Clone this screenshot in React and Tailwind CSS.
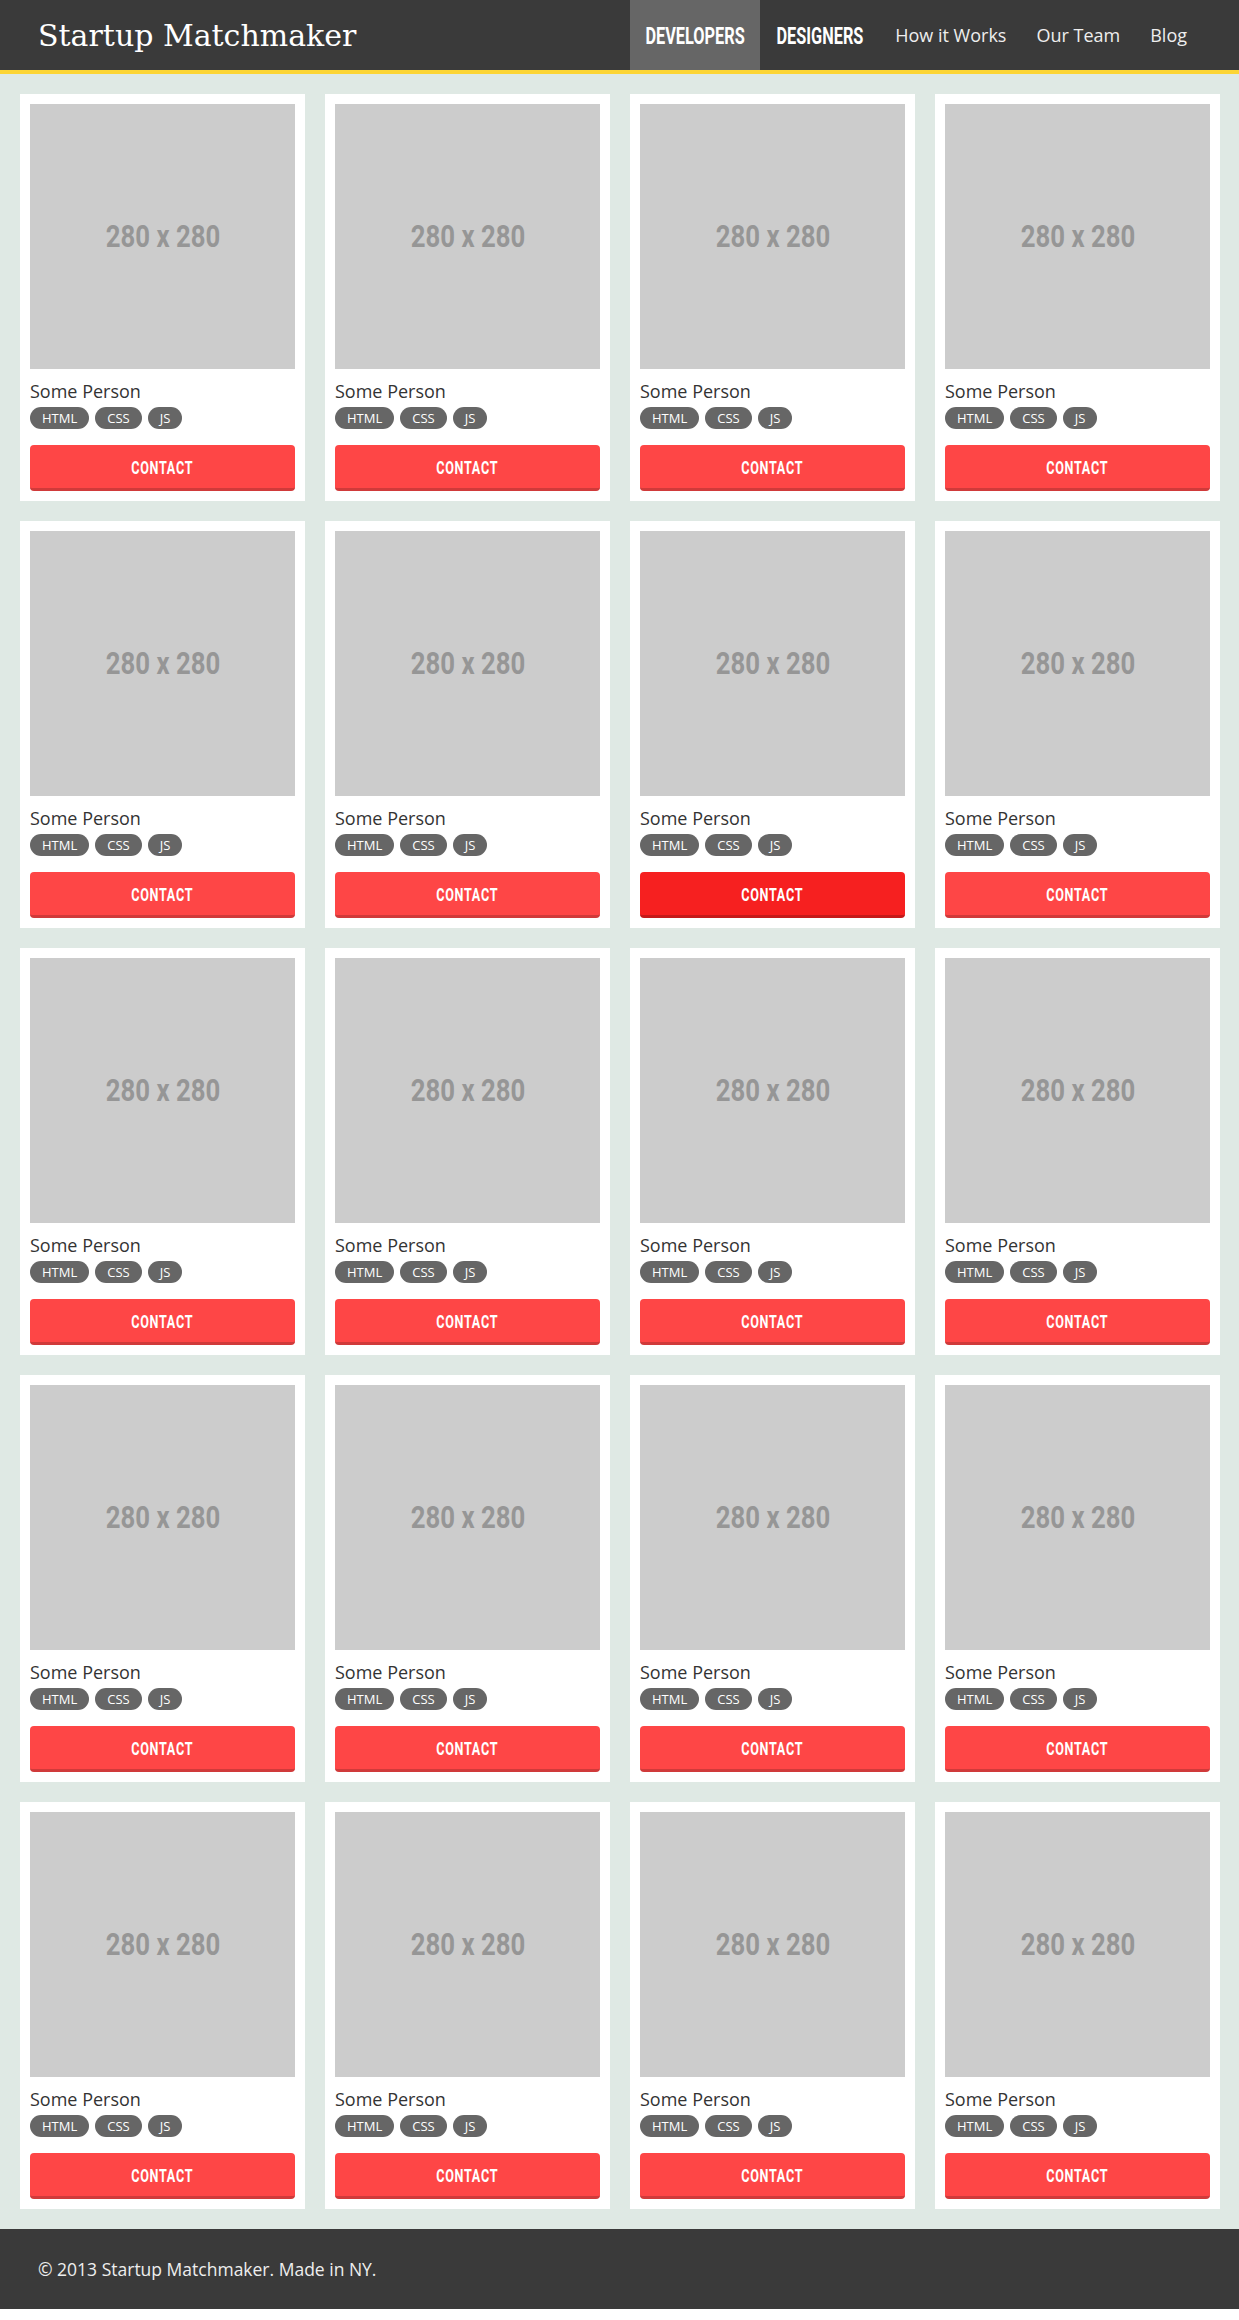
const sans = "font-['Open_Sans','Noto_Sans',sans-serif]";
const cond = "font-['Roboto','Liberation_Sans',sans-serif] font-bold";

const people = Array.from({ length: 20 }, (_, i) => ({
  id: i,
  name: "Some Person",
  skills: ["HTML", "CSS", "JS"],
}));

const navLinks = ["How it Works", "Our Team", "Blog"];

const Card = ({ person, hovered }) => (
  <div className="bg-white p-[10px]">
    {/* Placeholder image */}
    <div className="aspect-square w-full bg-[#cccccc] flex items-center justify-center pt-[2px]">
      <span className={`${cond} inline-block scale-x-[0.83] text-[31px] text-[#969696] whitespace-nowrap`}>280 x 280</span>
    </div>

    <p className={`${sans} mt-[10px] text-[18px] leading-[24px] text-[#333333]`}>{person.name}</p>

    <div className="mt-[4px] flex gap-[6px]">
      {person.skills.map((s) => (
        <span
          key={s}
          className={`${sans} h-[22px] px-[12px] rounded-full bg-[#666666] text-white text-[13px] leading-[22px]`}
        >
          {s}
        </span>
      ))}
    </div>

    <button
      className={`mt-[16px] w-full h-[46px] rounded-[4px] border-b-[3px] flex items-center justify-center pt-[2px] ${
        hovered ? "bg-[#f62020] border-[#c51a1a]" : "bg-[#fe4646] border-[#d03a3a]"
      }`}
    >
      <span className={`${cond} inline-block scale-x-[0.7] text-white text-[18px] tracking-[1px] whitespace-nowrap`}>
        CONTACT
      </span>
    </button>
  </div>
);

const App = () => {
  return (
    <div className="w-full min-h-[2309px] flex flex-col bg-[#dfe9e4]">
      {/* Navbar */}
      <header className="h-[74px] bg-[#3a3a3a] border-b-4 border-[#fcd535] flex items-stretch justify-between pl-[38px] pr-[37px]">
        <span className="self-center font-['DejaVu_Serif','Liberation_Serif',serif] text-[30px] text-white">
          Startup Matchmaker
        </span>
        <nav className="flex items-stretch">
          <a className="w-[130px] flex items-center justify-center pt-[2px] bg-[#666666]">
            <span className={`${cond} inline-block scale-x-[0.68] text-white text-[24px] whitespace-nowrap`}>DEVELOPERS</span>
          </a>
          <a className="w-[120px] flex items-center justify-center pt-[2px]">
            <span className={`${cond} inline-block scale-x-[0.68] text-white text-[24px] whitespace-nowrap`}>DESIGNERS</span>
          </a>
          {navLinks.map((l) => (
            <a key={l} className={`${sans} px-[15px] flex items-center text-[#eeeeee] text-[18px]`}>
              {l}
            </a>
          ))}
        </nav>
      </header>

      {/* Grid of people */}
      <main className="flex-1 grid grid-cols-4 gap-[20px] pl-[20px] pr-[19px] py-[20px]">
        {people.map((p) => (
          <Card key={p.id} person={p} hovered={p.id === 6} />
        ))}
      </main>

      {/* Footer */}
      <footer className="h-[80px] bg-[#3a3a3a] flex items-center px-[38px]">
        <p className={`${sans} text-[17.5px] text-[#eeeeee]`}>© 2013 Startup Matchmaker. Made in NY.</p>
      </footer>
    </div>
  );
};

export default App;
